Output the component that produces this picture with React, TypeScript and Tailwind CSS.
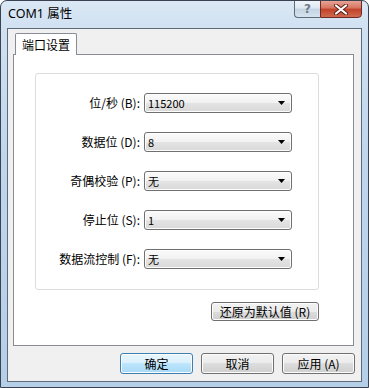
import React from "react";

const FONT = "font-['Noto_Sans','Noto_Sans_CJK_SC',sans-serif]";
const CJK = "font-['Noto_Sans_CJK_SC',sans-serif]";

function Arrow() {
  return (
    <svg width="7" height="4" viewBox="0 0 7 4" className="block">
      <path d="M0 0 H7 L3.5 4 Z" fill="#000" />
    </svg>
  );
}

function Select({ value }: { value: string }) {
  return (
    <div className="flex items-center justify-between w-[148px] h-[20px] rounded-[3px] border border-[#707070] bg-[linear-gradient(to_bottom,#fbfbfb_0%,#f1f1f1_50%,#e4e4e4_50%,#d9d9d9_100%)] shadow-[inset_0_0_0_1px_#fdfdfd] pl-[3px] pr-[6px]">
      <span className={`${CJK} text-[11px] leading-none text-black`}>{value}</span>
      <Arrow />
    </div>
  );
}

function Btn({ label, w, h, def }: { label: string; w: string; h: string; def?: boolean }) {
  const base = def
    ? "border-[#3c7fb1] bg-[linear-gradient(to_bottom,#eaf6fd_0%,#d9f0fc_50%,#bee6fd_50%,#a7d9f5_100%)]"
    : "border-[#707070] bg-[linear-gradient(to_bottom,#f2f2f2_0%,#ebebeb_50%,#dddddd_50%,#cfcfcf_100%)]";
  return (
    <div
      className={`${w} ${h} ${base} flex items-center justify-center rounded-[3px] border shadow-[inset_0_0_0_1px_#fcfcfc] ${CJK} text-[12px] leading-none text-black`}
    >
      {label}
    </div>
  );
}

export default function App() {
  const rows = [
    { label: "位/秒 (B):", value: "115200" },
    { label: "数据位 (D):", value: "8" },
    { label: "奇偶校验 (P):", value: "无" },
    { label: "停止位 (S):", value: "1" },
    { label: "数据流控制 (F):", value: "无" },
  ];
  return (
    <div
      className={`${FONT} relative w-[369px] h-[388px] flex flex-col rounded-t-[7px] border border-[#3b4350] bg-[linear-gradient(to_bottom,#dbe8f5_0%,#cfe0f1_8%,#bfd6ed_40%,#b5cfe9_100%)] overflow-hidden`}
    >
      {/* title bar */}
      <div className="h-[27px] shrink-0 flex items-center pl-[7px]">
        <span className="text-[12.5px] leading-none text-black">COM1 属性</span>
      </div>

      {/* caption buttons */}
      <div className="absolute top-[-1px] right-[6px] flex h-[18px]">
        <div className="w-[26px] h-[18px] flex items-center justify-center border border-[#5d6b7a] border-r-0 rounded-bl-[4px] bg-[linear-gradient(to_bottom,#f1f5fa_0%,#dde7f1_45%,#c4d3e3_50%,#d6e2ee_100%)]">
          <span className="font-['DejaVu_Sans',sans-serif] text-[12px] font-bold leading-none text-[#6f7b88]">?</span>
        </div>
        <div className="w-[42px] h-[18px] flex items-center justify-center border border-[#6e2a22] rounded-br-[4px] bg-[linear-gradient(to_bottom,#e7a496_0%,#d7735f_45%,#c2402a_50%,#cf6a4e_100%)]">
          <svg width="14" height="11" viewBox="0 0 14 11">
            <path d="M2 1.5 L12 9.5 M12 1.5 L2 9.5" stroke="#5a2019" strokeWidth="4" strokeLinecap="round" />
            <path d="M2 1.5 L12 9.5 M12 1.5 L2 9.5" stroke="#ffffff" strokeWidth="2.2" strokeLinecap="round" />
          </svg>
        </div>
      </div>

      {/* client area */}
      <div className="mx-[6px] mb-[5px] h-[354px] border border-[#5f6b78] bg-[#f0f0f0] flex flex-col pl-[5px] pt-[4px] pr-[6px]">
        {/* tabs */}
        <div className="flex h-[21px] relative z-10">
          <div className={`ml-[2px] w-[62px] h-[22px] bg-white border border-[#898c95] border-b-0 rounded-t-[2px] flex items-center pl-[6px] ${CJK} text-[12px] leading-none text-black`}>
            端口设置
          </div>
        </div>
        {/* pane */}
        <div className="w-[341px] h-[292px] bg-white border border-[#898c95] flex flex-col pl-[21px] pt-[18px]">
          <div className="w-[284px] h-[217px] rounded-[3px] border border-[#dcdcdc] flex flex-col gap-[19px] pt-[19px]">
            {rows.map((r) => (
              <div key={r.label} className="flex items-center h-[20px]">
                <div className={`w-[104px] text-right ${CJK} text-[12px] leading-none text-black`}>{r.label}</div>
                <div className="ml-[4px]">
                  <Select value={r.value} />
                </div>
              </div>
            ))}
          </div>
          <div className="w-[284px] flex justify-end mt-[12px]">
            <Btn label="还原为默认值 (R)" w="w-[108px]" h="h-[19px]" />
          </div>
        </div>
        {/* bottom buttons */}
        <div className="flex justify-end gap-[8px] mt-[7px]">
          <Btn label="确定" w="w-[73px]" h="h-[21px]" def />
          <Btn label="取消" w="w-[73px]" h="h-[21px]" />
          <Btn label="应用 (A)" w="w-[73px]" h="h-[21px]" />
        </div>
      </div>
    </div>
  );
}
